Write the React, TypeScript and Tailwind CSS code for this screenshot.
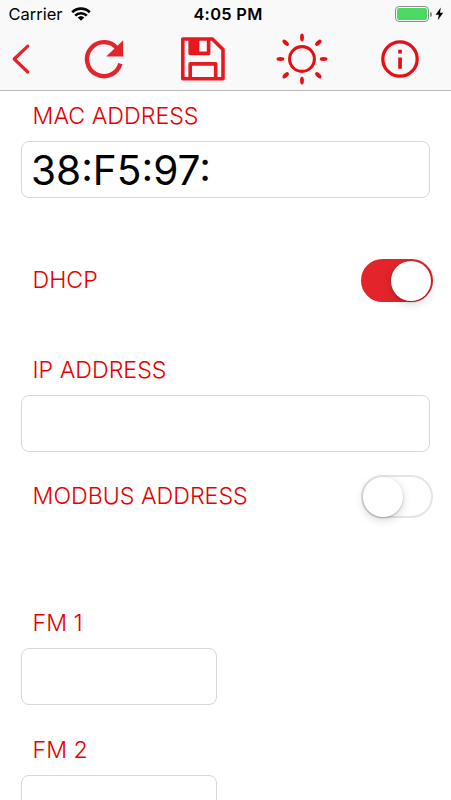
import React, { useState } from 'react';
import clsx from 'clsx';

const BackIcon = () => (
  <svg width="20" height="32" viewBox="11 43 20 32" fill="none" stroke="#e3242b" strokeWidth="3.2" strokeLinecap="round" strokeLinejoin="round">
    <path d="M27.8 46.2 14.2 59l13.6 13" />
  </svg>
);

const ReloadIcon = () => (
  <svg width="40" height="40" viewBox="84 38.5 40 40" fill="none">
    <path d="M120.4 63.2A17 17 0 1 1 117.6 48.4" stroke="#e3242b" strokeWidth="4.4" />
    <path d="M123.2 39.8V56h-17z" fill="#e3242b" />
  </svg>
);

const SaveIcon = () => (
  <svg width="44" height="44" viewBox="181 36.5 44 44" fill="none" stroke="#e51a20" strokeWidth="3.6" strokeLinejoin="round">
    <path d="M182.8 38.5h29.6l10.6 10.6v29.2h-40.2z" />
    <path d="M190.2 78.3V63.4h25.5v14.9" />
    <path d="M190.2 38.5v14.4h18.4V38.5" />
    <path d="M189 38h9.3v15H189z" fill="#e51a20" stroke="none" />
    <path d="M197.8 38.5v14.4" strokeWidth="3" />
  </svg>
);

const SunIcon = () => (
  <svg width="52" height="52" viewBox="-26 -26 52 52">
    <circle r="12.4" fill="none" stroke="#e60f14" strokeWidth="3.1" />
    {[0, 90, 180, 270].map(a => (
      <ellipse key={a} cx="21.6" rx="3.9" ry="1.9" fill="#e60f14" transform={`rotate(${a})`} />
    ))}
    {[45, 135, 225, 315].map(a => (
      <ellipse key={a} cx="23.1" rx="3.9" ry="2.1" fill="#e60f14" transform={`rotate(${a})`} />
    ))}
  </svg>
);

const InfoIcon = () => (
  <svg width="38" height="38" viewBox="-19 -19 38 38">
    <circle r="17.2" fill="none" stroke="#e60f14" strokeWidth="3.3" />
    <path d="M-1.8-9.2h3.7v3.7h-3.7zM-1.8-1.6h3.7V9.7h-3.7z" fill="#e60f14" />
  </svg>
);

const WifiIcon = () => (
  <svg width="20" height="14" viewBox="0 0 20 14" fill="none" stroke="#000" strokeWidth="2.7">
    <path d="M1.2 5.2a12.6 12.6 0 0 1 17.6 0" />
    <path d="M4.2 8.6a8.3 8.3 0 0 1 11.6 0" />
    <path d="M10 13.8 6.7 10.6a4.9 4.9 0 0 1 6.6 0z" fill="#000" stroke="none" />
  </svg>
);

const BoltIcon = () => (
  <svg width="9" height="14" viewBox="0 0 9 14">
    <path d="M5.8 0.6 0.6 7.8h3.2L2.8 13.2 8.2 5.8H5z" fill="#000" />
  </svg>
);

const StatusBar = () => (
  <div className="grid h-7 grid-cols-3 items-center text-black">
    <div className="flex items-center pl-[8.5px]">
      <span className="w-[62.5px] pt-px text-[16.5px]">Carrier</span>
      <WifiIcon />
    </div>
    <span className="pt-px pl-[5px] text-center text-[16.4px] font-semibold tracking-[0.3px]">4:05 PM</span>
    <div className="flex items-center justify-end pr-[7px]">
      <div className="h-4 w-[34px] rounded-[4px] border border-[#8e8e8e] p-px">
        <div className="h-full rounded-[2px] bg-[#4cd964]" />
      </div>
      <div className="ml-px h-[5px] w-[2px] rounded-r-full bg-[#8e8e8e]" />
      <div className="ml-[3px]">
        <BoltIcon />
      </div>
    </div>
  </div>
);

const NavBar = () => (
  <nav className="flex items-center pt-[4.5px]">
    <button className="ml-[11px]"><BackIcon /></button>
    <button className="ml-[53px]"><ReloadIcon /></button>
    <button className="ml-[57px]"><SaveIcon /></button>
    <button className="ml-[50.6px]"><SunIcon /></button>
    <button className="ml-[53.6px]"><InfoIcon /></button>
  </nav>
);

interface FieldProps {
  label: string;
  value?: string;
  short?: boolean;
}

const Field: React.FC<FieldProps> = ({ label, value = '', short }) => {
  const [text, setText] = useState(value);

  return (
    <label className="block">
      <span className="flex h-[50px] items-center pl-[11.5px] text-[23.2px] font-light text-[#e60000]">
        {label}
      </span>
      <input
        value={text}
        onChange={e => setText(e.target.value)}
        className={clsx(
          'block h-[57px] rounded-[8px] border border-[#d8d8d8] bg-white px-[9px] pt-[3px] text-[40.6px] text-black outline-none',
          short ? 'w-[196px]' : 'w-[409px]'
        )}
      />
    </label>
  );
};

interface SwitchRowProps {
  label: string;
  initial: boolean;
}

const SwitchRow: React.FC<SwitchRowProps> = ({ label, initial }) => {
  const [on, setOn] = useState(initial);

  return (
    <div className="flex h-[43px] items-center justify-between pr-[18px] pl-[11.5px]">
      <span className="text-[23.2px] font-light text-[#e60000]">{label}</span>
      <button
        role="switch"
        aria-checked={on}
        aria-label={label}
        onClick={() => setOn(!on)}
        className={clsx(
          'flex h-[43px] w-[72px] items-center rounded-full border-2',
          on ? 'justify-end border-[#e3242b] bg-[#e3242b]' : 'justify-start border-[#e5e5e5] bg-white'
        )}
      >
        <span className="h-10 w-10 rounded-full bg-white shadow-[0_3px_10px_rgba(0,0,0,0.16),0_1px_2px_rgba(0,0,0,0.22)]" />
      </button>
    </div>
  );
};

export default function App() {
  return (
    <div className="h-[800px] w-[451px] overflow-hidden bg-white font-['Inter',sans-serif]">
      <header className="h-[91px] border-b border-[#b9b9b9] bg-[#f9f9f9]">
        <StatusBar />
        <NavBar />
      </header>

      <main className="pl-[21px]">
        <Field label="MAC ADDRESS" value="38:F5:97:" />
        <div className="mt-[61px]">
          <SwitchRow label="DHCP" initial={true} />
        </div>
        <div className="mt-[43px]">
          <Field label="IP ADDRESS" />
        </div>
        <div className="mt-[23px]">
          <SwitchRow label="MODBUS ADDRESS" initial={false} />
        </div>
        <div className="mt-20 space-y-5">
          <Field label="FM 1" short />
          <Field label="FM 2" short />
        </div>
      </main>
    </div>
  );
}
